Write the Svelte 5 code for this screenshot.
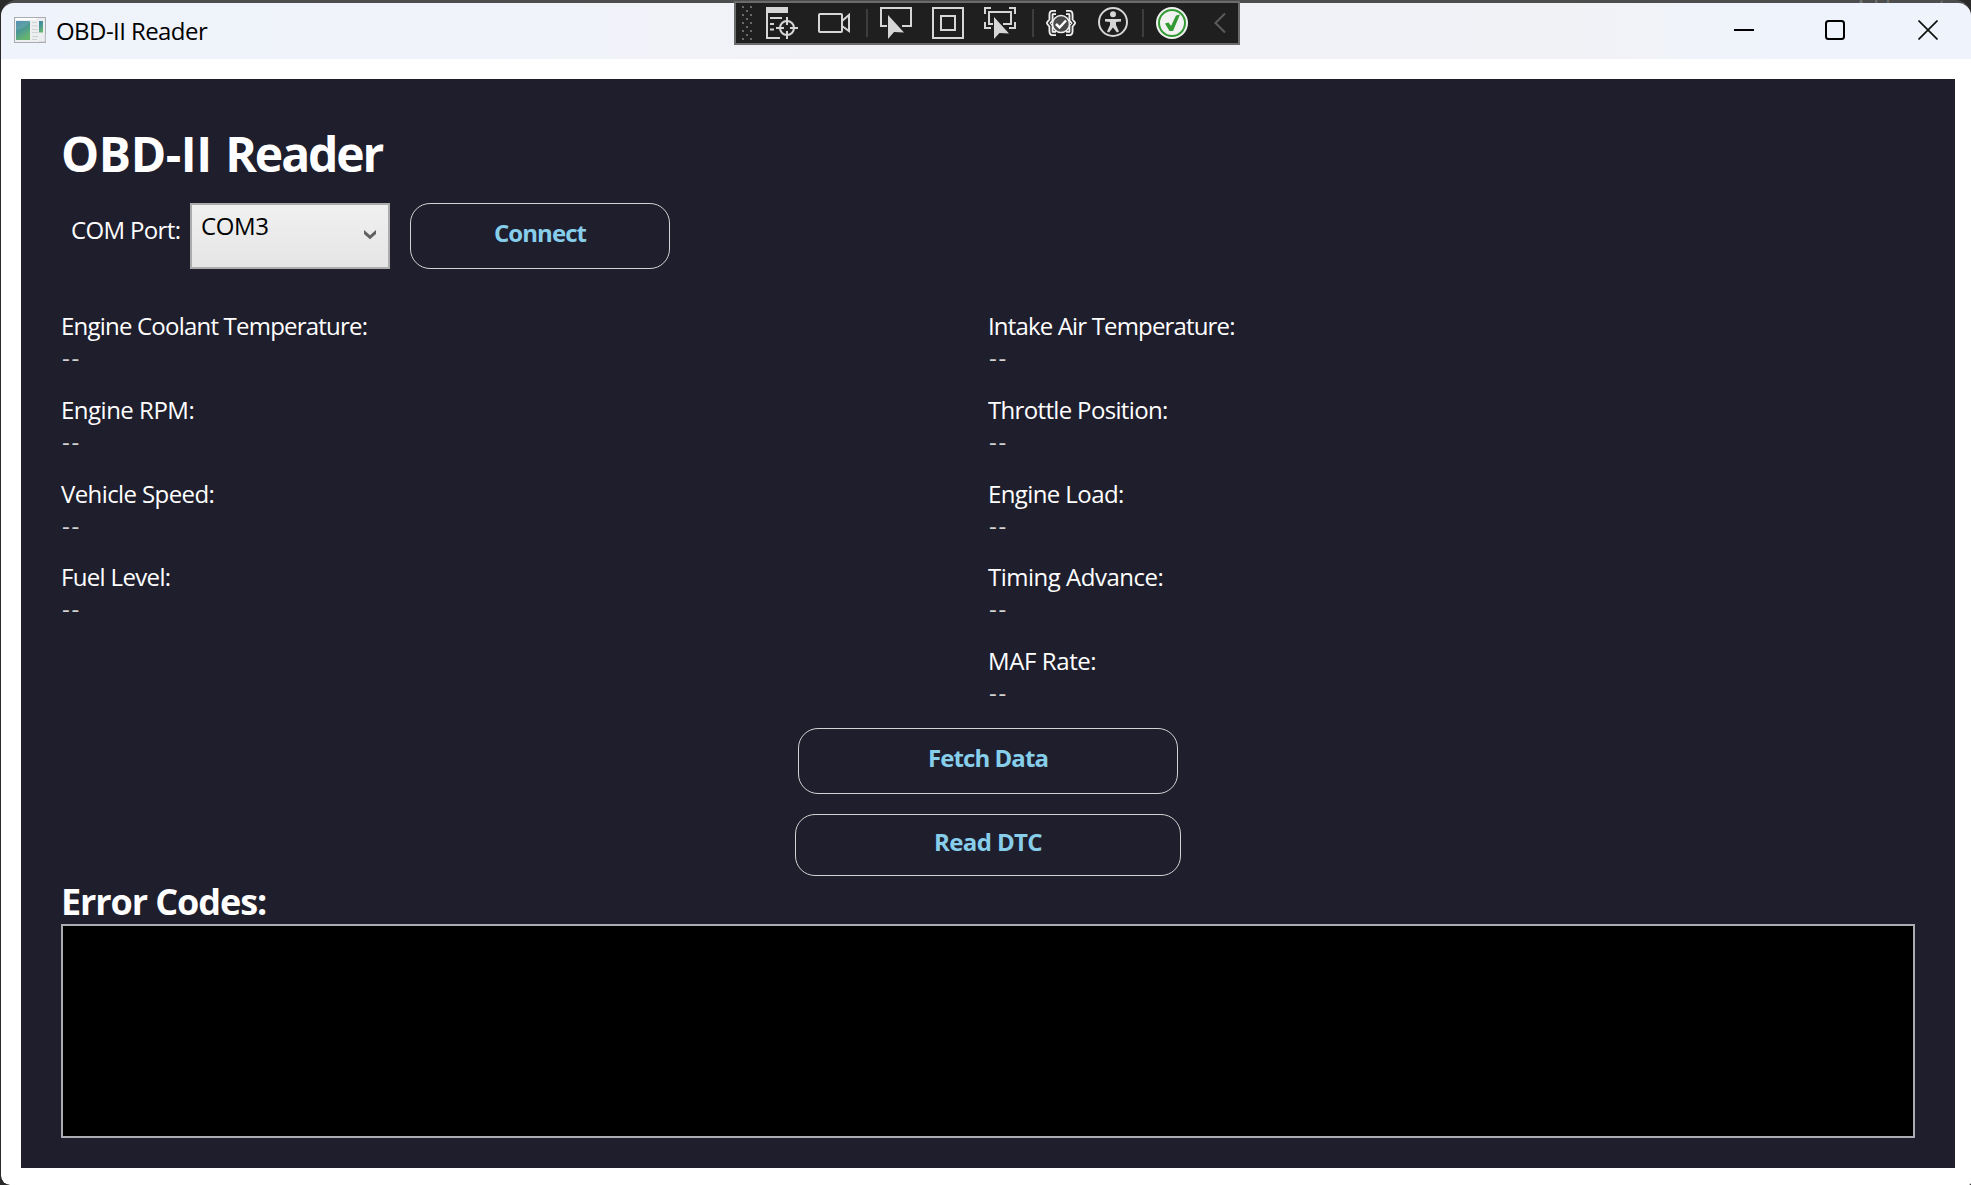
<script>
  const left = [
    { label: 'Engine Coolant Temperature:', value: '--', cls: 'ect' },
    { label: 'Engine RPM:', value: '--', cls: 'rpm' },
    { label: 'Vehicle Speed:', value: '--', cls: 'speed' },
    { label: 'Fuel Level:', value: '--', cls: 'fuel' },
  ];
  const right = [
    { label: 'Intake Air Temperature:', value: '--', cls: 'iat' },
    { label: 'Throttle Position:', value: '--', cls: 'throttle' },
    { label: 'Engine Load:', value: '--', cls: 'load' },
    { label: 'Timing Advance:', value: '--', cls: 'timing' },
    { label: 'MAF Rate:', value: '--', cls: 'maf' },
  ];
</script>

<div class="desktop">
  <div class="behind">Add counter</div>
  <div class="window">
    <header class="titlebar">
      <svg class="appicon" width="32" height="26" viewBox="0 0 32 26">
        <defs>
          <linearGradient id="pane" x1="0" y1="0" x2="0.5" y2="1">
            <stop offset="0" stop-color="#3f7fa8" />
            <stop offset="0.5" stop-color="#4a9796" />
            <stop offset="1" stop-color="#66b56e" />
          </linearGradient>
        </defs>
        <rect x="0.5" y="0.5" width="31" height="25" fill="#eceeef" stroke="#a9adb3" />
        <path d="M1.5 2H22" stroke="#fff" stroke-width="2" />
        <rect x="2" y="4" width="14" height="19" fill="url(#pane)" />
        <path d="M2 13C8 12 13 9 16 5V4H2Z" fill="#fff" opacity="0.12" />
        <path d="M18 5.5h5M18 9h6M18 12.500h6M18 15.500h6M18 19.500h6M18 22.500h5" stroke="#cfd2d4" stroke-width="1.200" />
        <rect x="25" y="4" width="4" height="11.500" fill="url(#pane)" />
        <path d="M25 24.500h6V17" stroke="#d5d7d9" fill="none" />
      </svg>
      <span class="caption">OBD-II Reader</span>
      <div class="controls">
        <svg width="20" height="20" viewBox="0 0 20 20"><path d="M0 10H20" stroke="#000" stroke-width="2" /></svg>
        <svg width="20" height="20" viewBox="0 0 20 20"><rect x="1" y="1" width="18" height="18" rx="2.500" fill="none" stroke="#000" stroke-width="2" /></svg>
        <svg width="20" height="20" viewBox="0 0 20 20"><path d="M0.500 0.500L19.500 19.500M19.500 0.500L0.500 19.500" stroke="#111" stroke-width="1.700" /></svg>
      </div>
    </header>

    <main class="panel">
      <h1><span class="obd">OBD-II</span> <span class="reader">Reader</span></h1>
      <div class="connection">
        <label class="port" for="port">COM Port:</label>
        <button class="select" id="port">
          <span class="com">COM3</span>
          <svg width="12" height="10" viewBox="0 0 12 10"><path d="M0 0L6 5.300L12 0V4L6 9.300L0 4Z" fill="#606060" /></svg>
        </button>
        <button class="pill connect"><span>Connect</span></button>
      </div>

      <section class="readings">
        {#each [left, right] as column}
          <dl>
            {#each column as item}
              <dt class={item.cls}>{item.label}</dt>
              <dd>{item.value}</dd>
            {/each}
          </dl>
        {/each}
      </section>

      <button class="pill fetch"><span>Fetch Data</span></button>
      <button class="pill dtc"><span>Read DTC</span></button>

      <h2>Error Codes:</h2>
      <div class="codes"></div>
    </main>
  </div>

  <!-- debugger toolbar floating over the title bar -->
  <div class="toolbar">
    <svg width="502" height="40" viewBox="736 3 502 40" fill="none" stroke="#d6d6d6" stroke-width="2">
      <g fill="#6a6a6a" stroke="none">
        {#each [6, 14, 22, 30, 38] as y}
          <rect x="742" {y} width="2" height="2" />
          <rect x="750" {y} width="2" height="2" />
        {/each}
        {#each [10, 18, 26, 34] as y}
          <rect x="746" {y} width="2" height="2" />
        {/each}
      </g>
      <path d="M867 9V37M1033 9V37M1143 9V37" stroke="#3d3d3d" />

      <path d="M780 38H767V8" />
      <path d="M766 7H788V13H766Z" fill="#d6d6d6" stroke="none" />
      <path d="M770 18H782M770 24H774M770 29.500H774" />
      <circle cx="787" cy="28" r="7" />
      <path d="M787 17V25M787 31V39M776 28H784M790 28H798" />

      <rect x="819" y="14" width="23" height="18" rx="1" />
      <path d="M842 21L849 15V31L842 26" />

      <path d="M887 26H881V8H911V26H902" />
      <path d="M888 15V39L894 32L904 32.500Z" fill="#d6d6d6" stroke="none" />

      <rect x="933" y="8" width="30" height="30" />
      <rect x="941" y="16" width="14" height="14" />

      <path d="M991 8H985V14M985 22V28H991M1009 8H1015V14M1015 22V28H1009" />
      <path d="M993 24H989V12H1011V24H1003" />
      <path d="M994 17V39L999.500 33L1009 33.500Z" fill="#d6d6d6" stroke="none" />

      <g stroke-linejoin="round">
        <path d="M1056 12.500H1052.500Q1051 12.500 1051 15V20L1048.500 23L1051 26V31Q1051 33.500 1052.500 33.500H1056M1066 12.500H1069.500Q1071 12.500 1071 15V20L1073.500 23L1071 26V31Q1071 33.500 1069.500 33.500H1066" stroke="#f0f0f0" stroke-width="5" />
        <path d="M1056 12.500H1052.500Q1051 12.500 1051 15V20L1048.500 23L1051 26V31Q1051 33.500 1052.500 33.500H1056M1066 12.500H1069.500Q1071 12.500 1071 15V20L1073.500 23L1071 26V31Q1071 33.500 1069.500 33.500H1066" stroke="#2a2a2a" stroke-width="1.300" />
      </g>
      <circle cx="1061" cy="24" r="8.500" fill="#4a4a4a" stroke="#f0f0f0" stroke-width="1.500" />
      <path d="M1056 24L1059.500 27.500L1066 20.500" stroke="#fff" stroke-width="2.500" />

      <circle cx="1113" cy="22" r="14" />
      <circle cx="1113" cy="14.300" r="3" fill="#d6d6d6" stroke="none" />
      <path d="M1105 19H1121V21.500L1116 22V25L1119 31.500L1117 32.500L1113 27.500L1109 32.500L1107 31.500L1110 25V22L1105 21.500Z" fill="#d6d6d6" stroke="none" />

      <circle cx="1172" cy="23" r="16" fill="#f2f2f2" stroke="none" />
      <circle cx="1172" cy="23" r="13" stroke="#339933" />
      <path d="M1165 23.500L1168.500 22.500L1171 26L1176 15.500L1180 14.500L1173 31H1169.500Z" fill="#339933" stroke="none" />

      <path d="M1225 13.500L1215.500 23L1225 32.500" stroke="#5c5c5c" />
    </svg>
  </div>
</div>

<style>
  :global(body) { margin: 0; }
  .desktop {
    position: relative;
    box-sizing: border-box;
    width: 1971px;
    height: 1185px;
    padding-left: 1px;
    background: #2a2a2a;
    overflow: hidden;
    font-family: 'Open Sans', 'Noto Sans', sans-serif;
    font-size: 24px;
    color: #fff;
  }
  .behind {
    position: absolute;
    left: 1855px;
    top: 0;
    font-size: 19px;
    line-height: 12px;
    white-space: nowrap;
    color: #c8c8c8;
  }
  .window {
    position: relative;
    box-sizing: border-box;
    height: 1185px;
    display: flex;
    flex-direction: column;
    background: #fff;
    border-top: 3px solid rgba(90, 90, 90, 0.75);
    background-clip: padding-box;
    border-radius: 16px 16px 2px 9px;
  }
  .titlebar {
    height: 56px;
    display: flex;
    align-items: flex-start;
    background: linear-gradient(90deg, #eff3fb, #f1f2f7 50%, #f1f2f6 80%, #eff3fb 90%);
    border-radius: 13px 13px 0 0;
    color: #000;
  }
  .appicon { margin: 14px 10px 0 13px; }
  .caption { line-height: 32px; margin-top: 12px; white-space: nowrap; letter-spacing: -0.57px; }
  .controls { display: flex; gap: 71px; margin: 17px 33px 0 auto; }
  .controls svg { display: block; }
  .controls svg:last-child { margin-left: 2px; }
  .panel {
    box-sizing: border-box;
    width: 1934px;
    height: 1089px;
    margin: 20px 0 0 20px;
    padding: 43px 40px 30px;
    background: #1f1e2d;
    display: flex;
    flex-direction: column;
  }
  .panel > :global(*) { flex: none; }
  h1, h2, dl, dt, dd { margin: 0; }
  h1 { font-size: 48px; line-height: 64px; height: 81px; white-space: nowrap; word-spacing: 1px; }
  .obd { letter-spacing: -0.4px; }
  .reader { letter-spacing: -2.1px; }
  button { font: inherit; box-sizing: border-box; padding: 0; }
  .connection { display: flex; height: 66px; }
  .port { width: 119px; padding: 11px 0 0 10px; box-sizing: border-box; margin-right: 10px; line-height: 32px; white-space: nowrap; letter-spacing: -0.65px; }
  .select {
    width: 200px;
    height: 66px;
    border: 2px solid #acacac;
    background: linear-gradient(#f0f0f0, #e5e5e5);
    display: flex;
    justify-content: space-between;
    align-items: flex-start;
    padding: 5px 12px 0 9px;
    color: #000;
    line-height: 32px;
    letter-spacing: -0.4px;
  }
  .select svg { margin-top: 20px; }
  .pill {
    border: 1px solid #d3d3d3;
    border-radius: 20px;
    background: none;
    color: #87ceeb;
    font-weight: 700;
    line-height: 32px;
    display: flex;
    justify-content: center;
    align-items: flex-start;
    flex: none;
    white-space: nowrap;
    letter-spacing: -0.93px;
  }
  .connect { width: 260px; margin-left: 20px; padding-top: 13px; }
  .readings { display: grid; grid-template-columns: 1fr 1fr; height: 419px; margin-top: 41px; }
  dt { height: 32px; line-height: 32px; white-space: nowrap; letter-spacing: -0.5px; }
  .ect { letter-spacing: -0.79px; }
  .iat { letter-spacing: -0.84px; }
  .speed, .load { letter-spacing: -0.6px; }
  .fuel, .throttle { letter-spacing: -0.66px; }
  .maf { letter-spacing: -0.4px; }
  dd { height: 31.8px; line-height: 32px; margin-bottom: 20px; color: #d3d3d3; letter-spacing: 1.9px; padding-left: 1px; }
  .fetch { width: 380px; height: 66px; margin: -1px auto 0; padding-top: 13px; }
  .dtc { width: 386px; height: 62px; margin: 20px auto 0; padding-top: 11px; letter-spacing: -0.6px; }
  h2 { font-size: 36px; line-height: 52px; height: 48px; white-space: nowrap; letter-spacing: -1.1px; }
  .codes { box-sizing: border-box; height: 214px; border: 2px solid #abadb3; background: #000; }
  .toolbar {
    position: absolute;
    left: 734px;
    top: 1px;
    width: 502px;
    height: 40px;
    border: 2px solid #6b6b6b;
    background: #1f1f1f;
  }
  .toolbar svg { display: block; }
</style>
